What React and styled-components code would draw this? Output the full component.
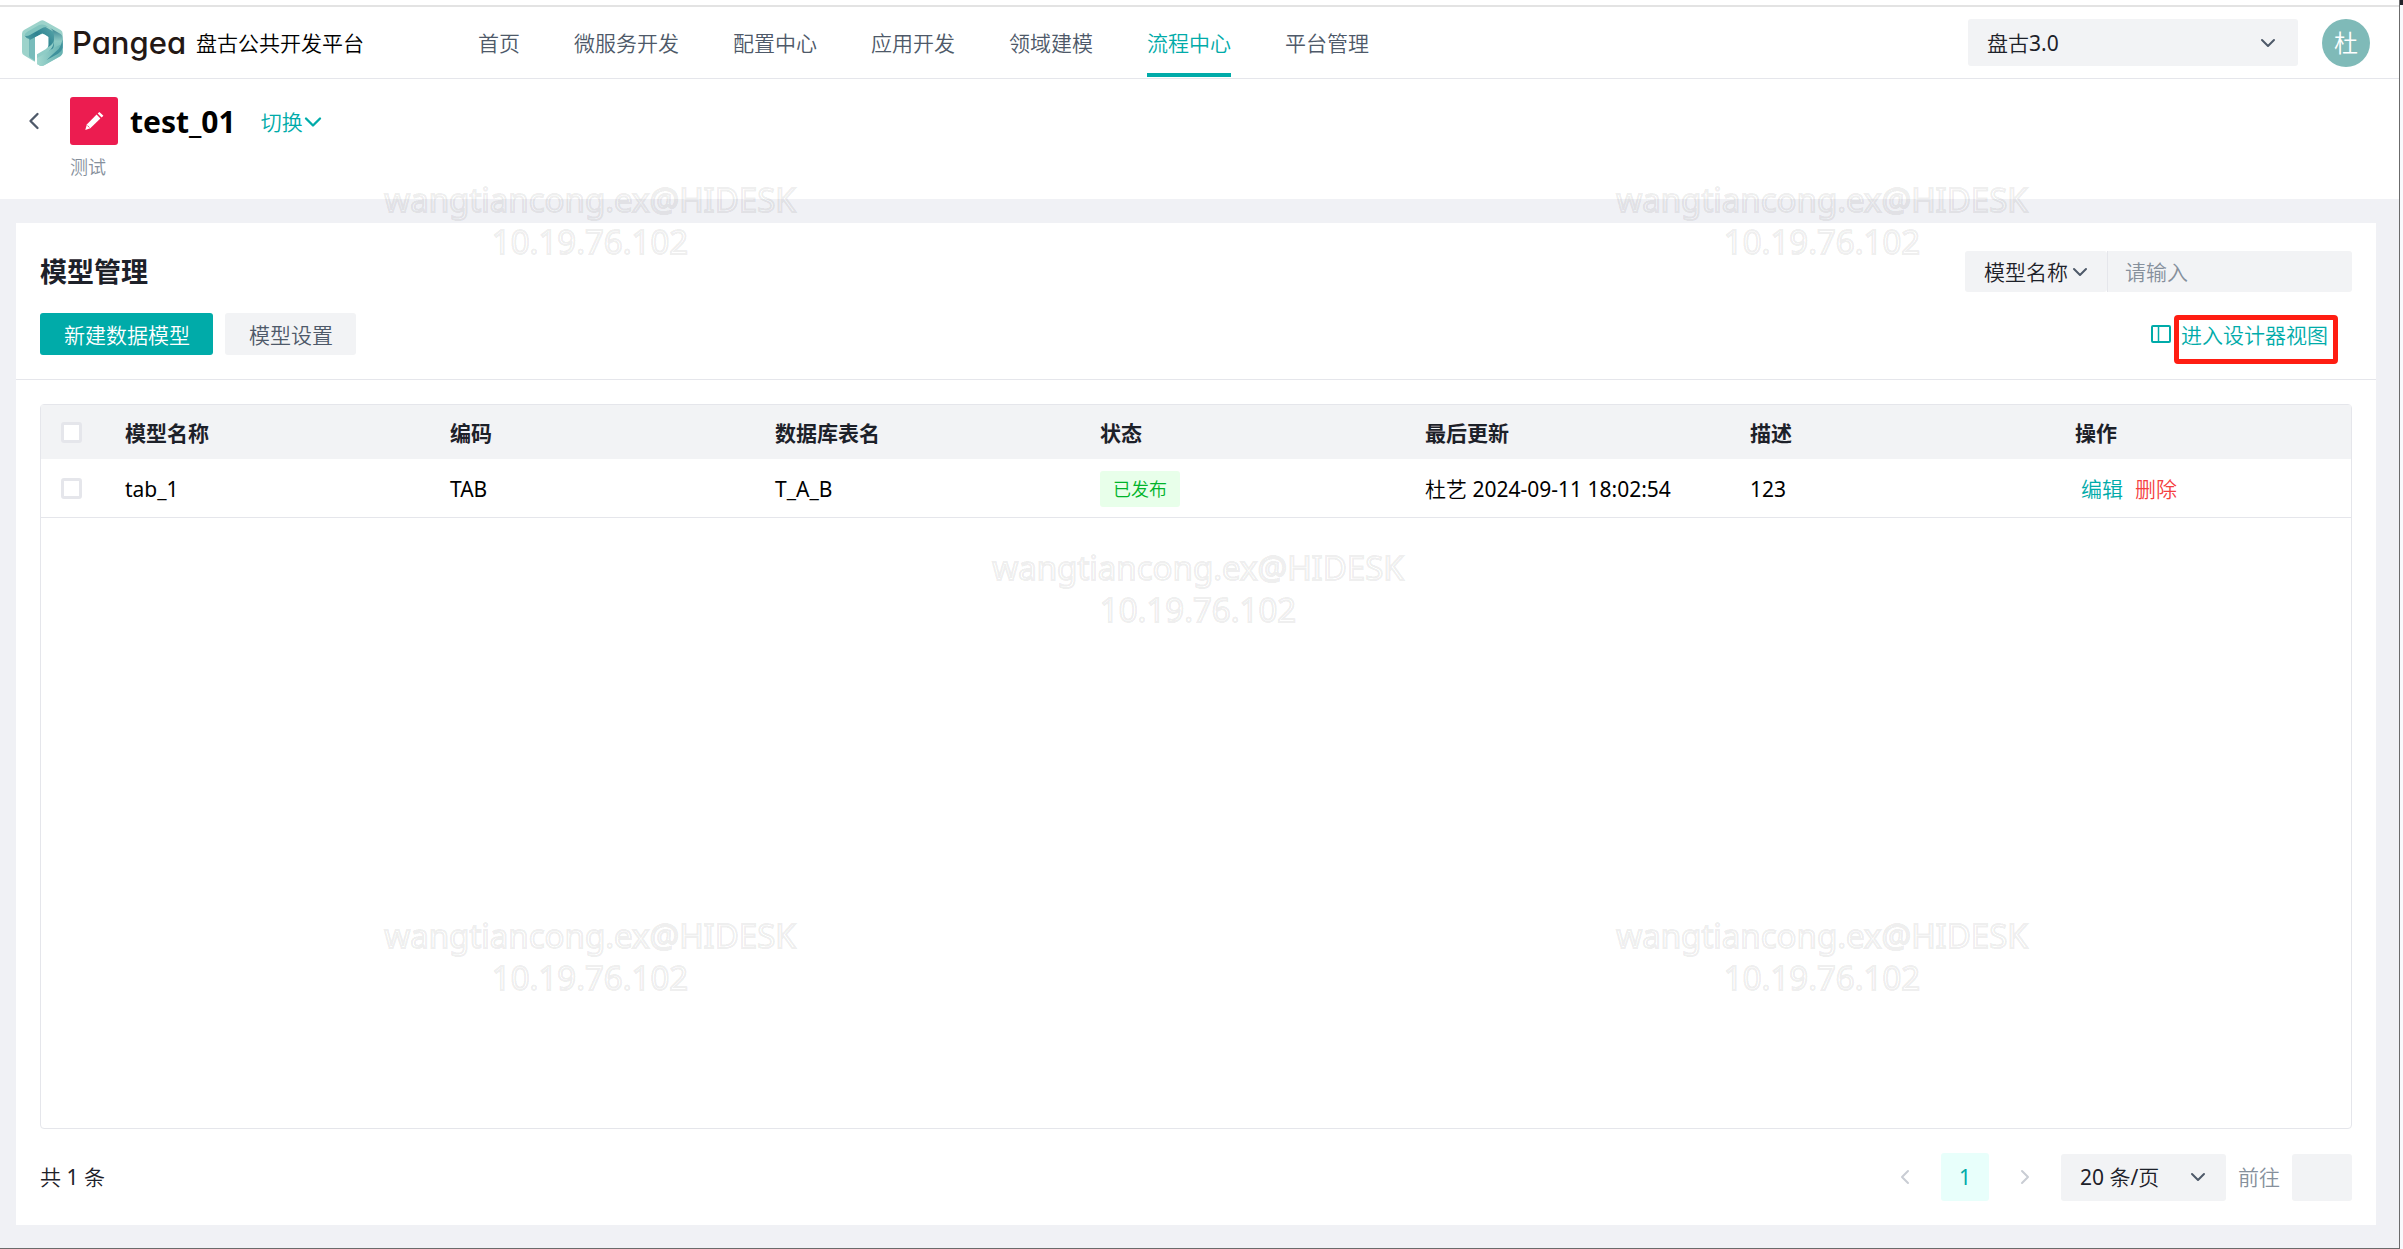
import React, { useState } from "react";
import styled, { createGlobalStyle } from "styled-components";
import { ChevronDown, ChevronLeft, ChevronRight } from "lucide-react";

const navItems = [
  "首页",
  "微服务开发",
  "配置中心",
  "应用开发",
  "领域建模",
  "流程中心",
  "平台管理",
];

const columns = [
  "模型名称",
  "编码",
  "数据库表名",
  "状态",
  "最后更新",
  "描述",
  "操作",
];

const models = [
  {
    name: "tab_1",
    code: "TAB",
    table: "T_A_B",
    status: "已发布",
    updated: "杜艺 2024-09-11 18:02:54",
    desc: "123",
  },
];

const watermarks = [
  { x: 590, y: 179 },
  { x: 1822, y: 179 },
  { x: 1198, y: 547 },
  { x: 590, y: 915 },
  { x: 1822, y: 915 },
];

const Logo = () => (
  <svg width="41" height="46" viewBox="18 15 123 138" aria-hidden="true">
    <defs>
      <linearGradient id="arch" x1="0" y1="1" x2="1" y2="0">
        <stop offset="0" stopColor="#6db5b3" />
        <stop offset="0.6" stopColor="#2f8391" />
        <stop offset="1" stopColor="#5aa8ab" />
      </linearGradient>
      <linearGradient id="side" x1="0" y1="0" x2="0" y2="1">
        <stop offset="0" stopColor="#357f8f" />
        <stop offset="0.4" stopColor="#8ccac4" />
        <stop offset="1" stopColor="#5fadb0" />
      </linearGradient>
      <linearGradient id="tail" x1="0" y1="0" x2="1" y2="0">
        <stop offset="0" stopColor="#a3d8cf" />
        <stop offset="1" stopColor="#64b0b0" />
      </linearGradient>
    </defs>
    <path
      d="M72 18q7-4 14 0l48 27q6 4 6 11v56q0 7-6 11l-48 27q-7 4-14 2l-9-5v-8l-6-1-1 2-32-19q-6-3-6-10V56q0-7 6-11z"
      fill="#9dd3cb"
    />
    <path d="M26 62l42-25q11-6 22 0l24 14v48l-17 11V66L79 55 57 68v65L40 124V72q-8 0-14-10z" fill="url(#arch)" />
    <path d="M26 62q0-8 8-12l34-19q10-5 20 0l14 8q-14-7-27 2L42 60q-8 4-16 2z" fill="#82c4bf" />
    <path d="M40 76l17-9v70l-17-10z" fill="#78bcbb" />
    <path d="M102 39l32 18q6 4 6 12v18q-3 14-17 22l-30 17-21 12 4-13 22-13q16-9 16-24V62q0-15-12-23z" fill="url(#side)" />
    <path d="M140 84v28q0 7-6 11l-48 27q-7 4-14 2l-9-5v-26l34-19v7l26-15q12-4 17-10z" fill="url(#tail)" />
    <path d="M62 116l35-20q15-9 17-22-1 26-18 36l-34 20z" fill="#8fccc6" />
    <path d="M140 72v26q-3 12-14 18l-34 19q22-21 36-33 9-12 12-30z" fill="#3f919c" />
    <path d="M57 67l15-8q8-4 15 0l10 7v24q0 8-7 12l-27 16v30l-6-4z" fill="#fff" />
  </svg>
);

const PencilIcon = () => (
  <svg width="20" height="20" viewBox="0 0 20 20" fill="#fff" aria-hidden="true">
    <path d="M12.6 3.6l3.8 3.8L6.3 17.2l-5 1.8 1.5-5.6z" />
    <path d="M13.7 2.6l1.7-1.6 4 3.8-1.8 1.8z" />
    <path d="M3.4 14.5l2 2" stroke="#ec1c50" strokeWidth="0.8" />
  </svg>
);

const PanelIcon = () => (
  <svg width="20" height="18" viewBox="0 0 20 18" fill="none" stroke="currentColor" aria-hidden="true">
    <rect x="1" y="1" width="18" height="16" rx="1" strokeWidth="2" />
    <path d="M7.5 1v16" strokeWidth="1.5" />
  </svg>
);

const Header = () => (
  <TopBar>
    <Brand href="#">
      <Logo />
      <BrandName>Pangea</BrandName>
      <BrandTitle>盘古公共开发平台</BrandTitle>
    </Brand>
    <Nav>
      {navItems.map((item) => (
        <NavLink href="#" key={item} $active={item === "流程中心"}>
          {item}
        </NavLink>
      ))}
    </Nav>
    <SelectBox $width="330px" $height="47px" $inset="18px">
      <select aria-label="项目" defaultValue="盘古3.0">
        <option>盘古3.0</option>
      </select>
      <ChevronDown size={24} strokeWidth={2} />
    </SelectBox>
    <Avatar>杜</Avatar>
  </TopBar>
);

const ProjectBar = () => (
  <Project>
    <BackButton aria-label="返回">
      <ChevronLeft size={28} strokeWidth={2} />
    </BackButton>
    <div>
      <ProjectRow>
        <ProjectIcon>
          <PencilIcon />
        </ProjectIcon>
        <ProjectName>test_01</ProjectName>
        <SwitchButton>
          切换
          <ChevronDown size={28} strokeWidth={2} />
        </SwitchButton>
      </ProjectRow>
      <ProjectDesc>测试</ProjectDesc>
    </div>
  </Project>
);

const ModelTable = () => (
  <TableFrame>
    <Table>
      <colgroup>
        <col style={{ width: 60 }} />
        {columns.map((name) => (
          <col key={name} style={name === "操作" ? { width: 300 } : undefined} />
        ))}
      </colgroup>
      <thead>
        <tr>
          <th>
            <Checkbox type="checkbox" aria-label="全选" />
          </th>
          {columns.map((name) => (
            <th key={name}>{name}</th>
          ))}
        </tr>
      </thead>
      <tbody>
        {models.map((model) => (
          <tr key={model.code}>
            <td>
              <Checkbox type="checkbox" aria-label={model.name} />
            </td>
            <td>{model.name}</td>
            <td>{model.code}</td>
            <td>{model.table}</td>
            <td>
              <Tag>{model.status}</Tag>
            </td>
            <td>{model.updated}</td>
            <td>{model.desc}</td>
            <td>
              <Actions>
                <ActionLink href="#">编辑</ActionLink>
                <ActionLink href="#" $danger>
                  删除
                </ActionLink>
              </Actions>
            </td>
          </tr>
        ))}
      </tbody>
    </Table>
  </TableFrame>
);

const Pagination = () => (
  <Footer>
    <Total>共 1 条</Total>
    <PageButton aria-label="上一页" disabled>
      <ChevronLeft size={24} />
    </PageButton>
    <PageButton $current>1</PageButton>
    <PageButton aria-label="下一页" disabled>
      <ChevronRight size={24} />
    </PageButton>
    <SelectBox $width="165px" $height="47px" $inset="16px">
      <select aria-label="每页条数" defaultValue="20">
        <option value="20">20 条/页</option>
      </select>
      <ChevronDown size={24} strokeWidth={2} />
    </SelectBox>
    <JumpLabel htmlFor="jump">前往</JumpLabel>
    <JumpInput id="jump" />
  </Footer>
);

const App = () => {
  const [keyword, setKeyword] = useState("");

  return (
    <Window>
      <GlobalStyle />
      <Page>
        <Header />
        <ProjectBar />
        <Content>
          <Card>
            <Toolbar>
              <ToolbarRow>
                <Title>模型管理</Title>
                <Search>
                  <SelectBox $width="142px" $height="41px" $inset="15px">
                    <select aria-label="搜索字段" defaultValue="模型名称">
                      <option>模型名称</option>
                    </select>
                    <ChevronDown size={24} strokeWidth={2} />
                  </SelectBox>
                  <SearchInput
                    aria-label="关键字"
                    placeholder="请输入"
                    value={keyword}
                    onChange={(e) => setKeyword(e.target.value)}
                  />
                </Search>
              </ToolbarRow>
              <ToolbarRow>
                <ButtonGroup>
                  <Button $primary>新建数据模型</Button>
                  <Button>模型设置</Button>
                </ButtonGroup>
                <DesignerLink href="#">
                  <PanelIcon />
                  <Marked>进入设计器视图</Marked>
                </DesignerLink>
              </ToolbarRow>
            </Toolbar>
            <ModelTable />
            <Pagination />
          </Card>
        </Content>
      </Page>
      <DesktopEdge />
      {watermarks.map(({ x, y }) => (
        <Watermark key={`${x}-${y}`} style={{ left: x, top: y }} aria-hidden="true">
          wangtiancong.ex@HIDESK
          <br />
          10.19.76.102
        </Watermark>
      ))}
    </Window>
  );
};

export default App;

const GlobalStyle = createGlobalStyle`
  * {
    box-sizing: border-box;
  }
  body {
    margin: 0;
    color: #1d2129;
    background-color: #fff;
  }
  body, button, input, select {
    font-family: "Noto Sans", "Noto Sans CJK SC DemiLight", "Noto Sans CJK SC", sans-serif;
    font-size: 21px;
    line-height: 32px;
  }
  h1, h2, th {
    font-family: "Noto Sans", "Noto Sans CJK SC", sans-serif;
  }
  button {
    padding: 0;
    border: 0;
    background: none;
    cursor: pointer;
  }
  a {
    text-decoration: none;
  }
`;

const Window = styled.div`
  position: relative;
  display: flex;
  min-height: 100vh;
`;

const Page = styled.div`
  flex: 1;
  display: flex;
  flex-direction: column;
  padding-top: 5px;
  border-right: 1px solid #6b6b6b;
  border-bottom: 1px solid #6b6b6b;
`;

const DesktopEdge = styled.div`
  width: 3px;
  border-top: 5px solid #23232b;
  background-color: #f8f9fc;
`;

const TopBar = styled.header`
  display: flex;
  align-items: center;
  height: 74px;
  padding: 0 29px 0 22px;
  border-top: 2px solid #e3e3e3;
  border-bottom: 1px solid #e5e6eb;
`;

const Brand = styled.a`
  display: flex;
  align-items: center;
  color: #000;
`;

const BrandName = styled.span`
  margin: 0 10px 0 9px;
  color: #231815;
  font-family: Inter, sans-serif;
  font-size: 31px;
  font-weight: 500;
  font-feature-settings: "cv11";
`;

const BrandTitle = styled.span`
  white-space: nowrap;
`;

const Nav = styled.nav`
  flex: 1;
  display: flex;
  align-self: stretch;
  gap: 54px;
  margin-left: 114px;
`;

const NavLink = styled.a`
  display: flex;
  align-items: center;
  margin-bottom: 1px;
  padding-top: 6px;
  border-bottom: 4px solid ${(props) => (props.$active ? "#00aba9" : "transparent")};
  color: ${(props) => (props.$active ? "#00aba9" : "#4e5969")};
  white-space: nowrap;
`;

const SelectBox = styled.div`
  display: grid;
  align-items: center;
  flex-shrink: 0;
  width: ${(props) => props.$width};
  height: ${(props) => props.$height};
  > select,
  > svg {
    grid-area: 1 / 1;
  }
  > select {
    height: 100%;
    padding: 0 19px;
    border: 0;
    border-radius: 3px;
    appearance: none;
    background-color: #f2f3f5;
    color: #1d2129;
  }
  > svg {
    justify-self: end;
    margin-right: ${(props) => props.$inset};
    color: #4e5969;
    pointer-events: none;
  }
`;

const Avatar = styled.div`
  flex-shrink: 0;
  width: 48px;
  height: 48px;
  margin-left: 24px;
  border-radius: 50%;
  background-color: #7fbab8;
  color: #fff;
  font-size: 24px;
  line-height: 48px;
  text-align: center;
`;

const Project = styled.section`
  display: flex;
  align-items: flex-start;
  height: 120px;
  padding: 18px 20px 0;
`;

const BackButton = styled.button`
  display: flex;
  align-items: center;
  width: 50px;
  height: 48px;
  color: #4e5969;
`;

const ProjectRow = styled.div`
  display: flex;
  align-items: center;
  height: 48px;
`;

const ProjectIcon = styled.div`
  display: flex;
  align-items: center;
  justify-content: center;
  width: 48px;
  height: 48px;
  border-radius: 3px;
  background-color: #ec1c50;
`;

const ProjectName = styled.h1`
  margin: 2px 25px 0 12px;
  color: #000;
  font-size: 30px;
  font-weight: 700;
`;

const SwitchButton = styled.button`
  display: flex;
  align-items: center;
  padding-top: 2px;
  color: #00aba9;
  > svg {
    margin-left: -4px;
  }
`;

const ProjectDesc = styled.p`
  margin: 8px 0 0;
  color: #86909c;
  font-size: 18px;
  line-height: 28px;
`;

const Content = styled.main`
  flex: 1;
  display: flex;
  padding: 24px 23px 23px 16px;
  background-color: #f0f1f5;
`;

const Card = styled.section`
  flex: 1;
  display: flex;
  flex-direction: column;
  background-color: #fff;
`;

const Toolbar = styled.div`
  display: flex;
  flex-direction: column;
  gap: 21px;
  padding: 28px 24px 24px;
  border-bottom: 1px solid #e5e6eb;
`;

const ToolbarRow = styled.div`
  display: flex;
  align-items: center;
  justify-content: space-between;
`;

const Title = styled.h2`
  margin: 0;
  font-size: 27px;
  font-weight: 700;
`;

const Search = styled.div`
  display: flex;
`;

const SearchInput = styled.input`
  width: 245px;
  padding: 0 17px;
  border: 0;
  border-left: 1px solid #e5e6eb;
  border-radius: 0 3px 3px 0;
  background-color: #f2f3f5;
  &::placeholder {
    color: #86909c;
  }
`;

const ButtonGroup = styled.div`
  display: flex;
  gap: 12px;
`;

const Button = styled.button`
  height: 42px;
  padding: 2px 23px 0 24px;
  border-radius: 3px;
  background-color: ${(props) => (props.$primary ? "#00aba9" : "#f2f3f5")};
  color: ${(props) => (props.$primary ? "#fff" : "#4e5969")};
`;

const DesignerLink = styled.a`
  display: flex;
  align-items: center;
  gap: 10px;
  padding-right: 24px;
  color: #00aba9;
`;

const Marked = styled.span`
  position: relative;
  padding-top: 2px;
  &::after {
    content: "";
    position: absolute;
    inset: -2px -10px -13px -7px;
    border: 5px solid #ff1d12;
    border-radius: 4px;
    pointer-events: none;
  }
`;

const TableFrame = styled.div`
  flex: 1;
  margin: 24px 24px 0;
  border: 1px solid #e5e6eb;
  border-radius: 4px;
`;

const Table = styled.table`
  width: 100%;
  table-layout: fixed;
  border-collapse: separate;
  border-spacing: 0;
  th,
  td {
    padding: 2px 24px 0;
    text-align: left;
    white-space: nowrap;
  }
  th:first-child,
  td:first-child {
    padding: 0 0 0 20px;
  }
  th {
    height: 54px;
    background-color: #f2f3f5;
    font-weight: 700;
  }
  td {
    height: 59px;
    border-bottom: 1px solid #e5e6eb;
    color: #000;
  }
`;

const Checkbox = styled.input`
  display: block;
  width: 21px;
  height: 21px;
  margin: 0;
  border: 3px solid #e5e6eb;
  border-radius: 3px;
  appearance: none;
  background-color: #fff;
`;

const Tag = styled.span`
  display: block;
  width: fit-content;
  padding: 0 13px;
  border-radius: 3px;
  background-color: #e8ffea;
  color: #00b42a;
  font-size: 18px;
  line-height: 36px;
`;

const Actions = styled.div`
  display: flex;
  gap: 12px;
  padding-left: 6px;
`;

const ActionLink = styled.a`
  color: ${(props) => (props.$danger ? "#f53f3f" : "#00aba9")};
`;

const Footer = styled.footer`
  display: flex;
  align-items: center;
  height: 96px;
  padding: 0 24px;
`;

const Total = styled.span`
  flex: 1;
`;

const PageButton = styled.button`
  display: flex;
  align-items: center;
  justify-content: center;
  width: 48px;
  height: 48px;
  margin-right: 12px;
  border-radius: 3px;
  background-color: ${(props) => (props.$current ? "#e8fffb" : "transparent")};
  color: ${(props) => (props.$current ? "#00aba9" : "#c9cdd4")};
`;

const JumpLabel = styled.label`
  margin: 0 12px;
  color: #86909c;
`;

const JumpInput = styled.input`
  width: 60px;
  height: 47px;
  border: 0;
  border-radius: 3px;
  background-color: #f2f3f5;
`;

const Watermark = styled.div`
  position: absolute;
  color: transparent;
  font-size: 33px;
  line-height: 42px;
  text-align: center;
  white-space: nowrap;
  transform: translateX(-50%);
  -webkit-text-stroke: 2px rgba(0, 0, 0, 0.08);
  pointer-events: none;
`;
